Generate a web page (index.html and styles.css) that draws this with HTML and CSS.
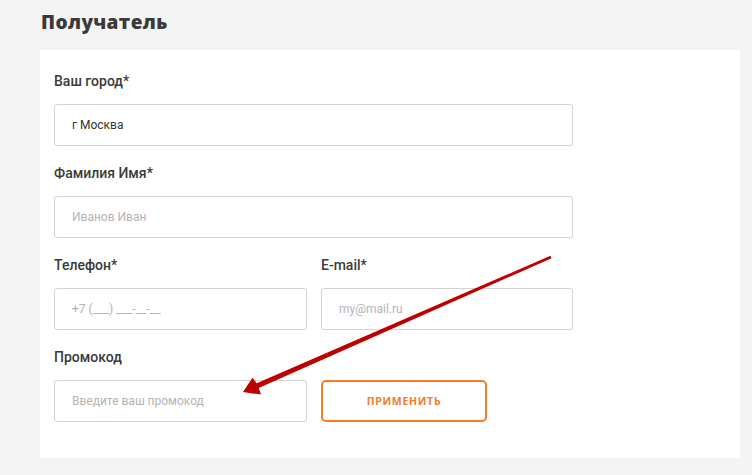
FILE: index.html
```html
<!DOCTYPE html>
<html lang="ru">
<head>
<meta charset="utf-8">
<link rel="stylesheet" href="styles.css">
</head>
<body>
<div class="page">
  <h2 class="title">Получатель</h2>
  <div class="card">
    <div class="field">
      <label class="label">Ваш город*</label>
      <input class="input" type="text" value="г Москва">
    </div>
    <div class="field">
      <label class="label">Фамилия Имя*</label>
      <input class="input" type="text" placeholder="Иванов Иван">
    </div>
    <div class="row">
      <div class="field">
        <label class="label">Телефон*</label>
        <input class="input" type="text" placeholder="+7 (___) ___-__-__">
      </div>
      <div class="field">
        <label class="label">E-mail*</label>
        <input class="input" type="text" placeholder="my@mail.ru">
      </div>
    </div>
    <div class="field last">
      <label class="label">Промокод</label>
      <div class="promo">
        <input class="input" type="text" placeholder="Введите ваш промокод">
        <button class="btn" type="button">Применить</button>
      </div>
    </div>
  </div>
</div>
<svg class="arrow" width="752" height="475" viewBox="0 0 752 475">
  <polygon points="550.4,255.8 256.7,383.3 252.5,377.8 243,392 261,394.6 258.7,387.9 551.6,258.2" fill="#bd0000"/>
</svg>
</body>
</html>
```
FILE: styles.css
```css
* { box-sizing: border-box; }
html, body { margin: 0; padding: 0; }
body {
  background: #f4f4f4;
  width: 752px;
  height: 475px;
  overflow: hidden;
  position: relative;
  font-family: Roboto, "Liberation Sans", sans-serif;
}
.page {
  padding: 7px 12px 0 40px;
}
.title {
  margin: 0 0 13px 1px;
  font-family: "Open Sans", "Noto Sans", sans-serif;
  font-weight: 800;
  font-size: 19px;
  letter-spacing: 0.4px;
  line-height: 30px;
  color: #3a3a3a;
}
.card {
  background: #fff;
  width: 700px;
  padding: 21px 14px 36px 14px;
}
.field {
  display: flex;
  flex-direction: column;
  margin-bottom: 17px;
}
.field.last { margin-bottom: 0; }
.label {
  font-size: 14px;
  font-weight: 500;
  line-height: 20px;
  color: #3b3b3b;
  margin-bottom: 13px;
}
.input {
  width: 519px;
  height: 42px;
  border: 1px solid #d3d3d3;
  border-radius: 3px;
  padding: 0 17px;
  font-family: Roboto, "Liberation Sans", sans-serif;
  font-size: 12px;
  color: #333;
  background: #fff;
  outline: none;
}
.input::placeholder { color: #b4b4b4; }
.row {
  display: grid;
  grid-template-columns: 253px 252px;
  column-gap: 14px;
}
.row .input { width: 100%; }
.promo {
  display: flex;
  gap: 14px;
}
.promo .input { width: 253px; }
.btn {
  width: 166px;
  height: 42px;
  border: 2px solid #fb7a24;
  border-radius: 5px;
  background: #fff;
  color: #f47a2f;
  font-family: "Open Sans", "Noto Sans", sans-serif;
  font-weight: 700;
  font-size: 10.5px;
  letter-spacing: 0.7px;
  text-transform: uppercase;
  padding: 0;
}
.arrow {
  position: absolute;
  left: 0;
  top: 0;
  pointer-events: none;
}
```
